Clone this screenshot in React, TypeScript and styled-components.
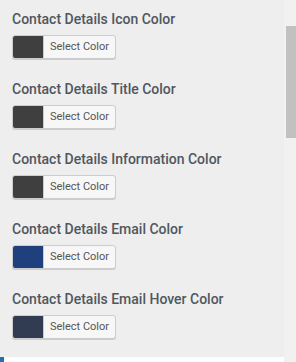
import styled, { createGlobalStyle } from "styled-components"

const GlobalStyle = createGlobalStyle`
  html, body {
    margin: 0;
    padding: 0;
    background: #eeeeee;
  }
`

const Frame = styled.div`
  width: 296px;
  height: 362px;
  display: flex;
  overflow: hidden;
  font-family: Roboto, "Liberation Sans", sans-serif;
`

const Panel = styled.div`
  width: 284px;
  background: #eeeeee;
  display: flex;
  flex-direction: column;
`

const Section = styled.div`
  padding: 9px 12px 0;
  height: 70px;
  box-sizing: border-box;
  flex-shrink: 0;
`

const Title = styled.div`
  font-size: 14px;
  line-height: 20px;
  font-weight: 500;
  color: #50575e;
  margin-bottom: 6px;
  white-space: nowrap;
`

const ColorButton = styled.button`
  display: flex;
  align-items: stretch;
  width: 104px;
  height: 24px;
  padding: 0;
  border: 1px solid #cccccc;
  border-radius: 3px;
  background: #f7f7f7;
  box-shadow: 0 1px 0 #cccccc;
  overflow: hidden;
  cursor: pointer;
`

const Swatch = styled.span<{ $color: string }>`
  width: 30px;
  background: ${(p) => p.$color};
  border-right: 1px solid #cccccc;
`

const ButtonLabel = styled.span`
  flex: 1;
  font-family: Roboto, "Liberation Sans", sans-serif;
  font-size: 11px;
  line-height: 22px;
  color: #555555;
  text-align: center;
`

const NextBlock = styled.div`
  margin-top: 7px;
  flex: 1;
  background: #ffffff;
  border-left: 4px solid #2271b1;
`

const Track = styled.div`
  width: 12px;
  background: #f1f1f1;
  display: flex;
  justify-content: flex-end;
`

const Thumb = styled.div`
  margin-top: 26px;
  width: 10px;
  height: 112px;
  background: #c1c1c1;
`

const controls = [
  { title: "Contact Details Icon Color", color: "#3f3f3f" },
  { title: "Contact Details Title Color", color: "#3f3f3f" },
  { title: "Contact Details Information Color", color: "#3f3f3f" },
  { title: "Contact Details Email Color", color: "#1f3f7d" },
  { title: "Contact Details Email Hover Color", color: "#313c52" },
]

export default function App() {
  return (
    <>
      <GlobalStyle />
      <Frame>
        <Panel>
          {controls.map((c) => (
            <Section key={c.title}>
              <Title>{c.title}</Title>
              <ColorButton type="button">
                <Swatch $color={c.color} />
                <ButtonLabel>Select Color</ButtonLabel>
              </ColorButton>
            </Section>
          ))}
          <NextBlock />
        </Panel>
        <Track>
          <Thumb />
        </Track>
      </Frame>
    </>
  )
}
